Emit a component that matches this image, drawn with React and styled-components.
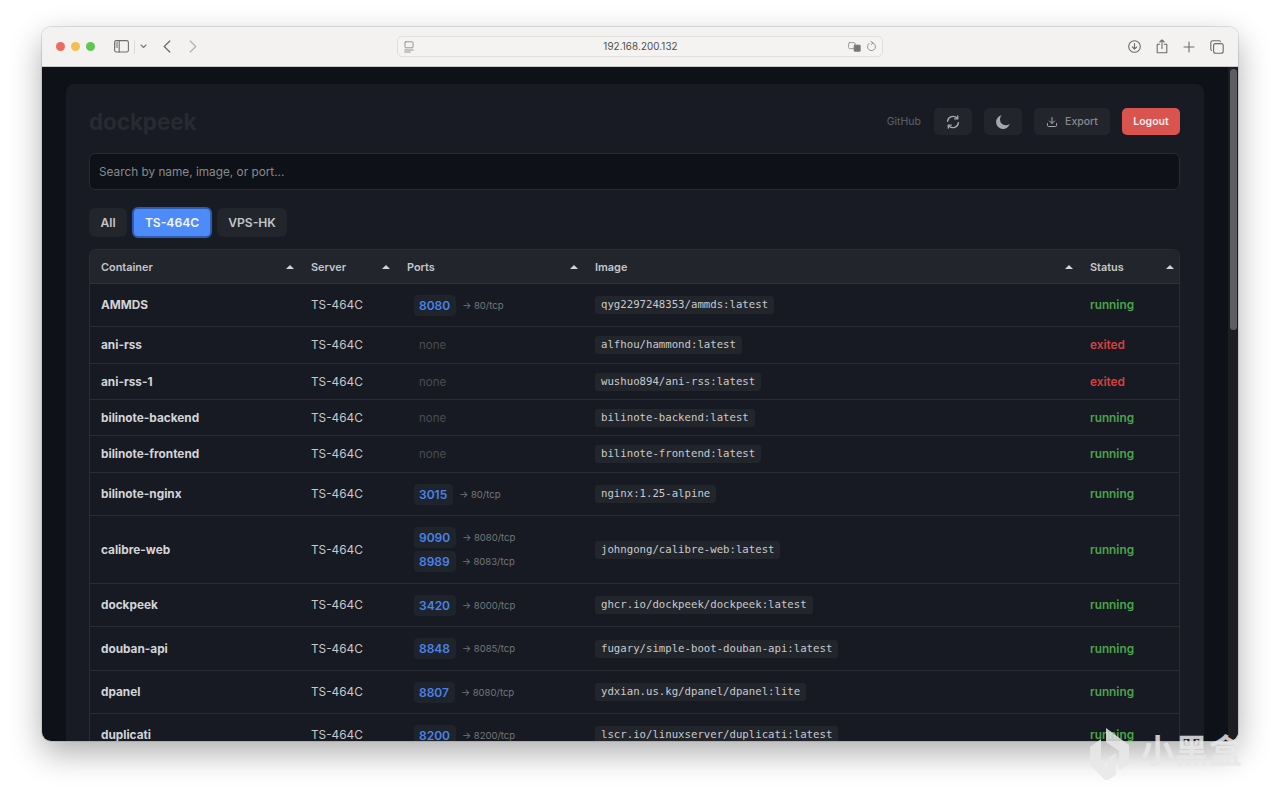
import React from 'react';
import styled, { createGlobalStyle } from 'styled-components';
import { Download } from 'lucide-react';

const Global = createGlobalStyle`
  html, body { margin: 0; padding: 0; background: #fff; height: 100%; overflow: hidden; }
  * { box-sizing: border-box; }
  body { font-family: Inter, "Liberation Sans", sans-serif; }
`;
const Stage = styled.div`
  position: relative;
  width: 1280px;
  height: 797px;
  padding: 27px 42px 56px;
  background: #fff;
  overflow: hidden;
`;
const Win = styled.div`
  display: flex;
  flex-direction: column;
  height: 714px;
  border-radius: 9px;
  overflow: hidden;
  box-shadow: 0 0 0 1px rgba(0,0,0,.1), 0 12px 32px rgba(0,0,0,.32);
`;
const Toolbar = styled.header`
  display: flex;
  align-items: center;
  flex: none;
  height: 40px;
  background: #f3f2f0;
  border-bottom: 1px solid #c9c9c9;
  padding: 0 14px;
`;
const Lights = styled.div`
  display: flex;
  gap: 6px;
  margin-right: 19px;
`;
const Light = styled.span`
  width: 9px;
  height: 9px;
  border-radius: 50%;
  background: ${p => p.$c};
`;
const ToolIcon = styled.svg`
  flex: none;
  display: block;
  margin-left: ${p => p.$ml || 0}px;
  stroke: ${p => p.$c || '#6c6c6c'};
  fill: none;
  stroke-width: ${p => p.$sw || 1.1};
  stroke-linecap: round;
  stroke-linejoin: round;
`;
const Sep = styled.span`
  width: 1px;
  height: 14px;
  background: #dcdcda;
  margin-left: 5px;
`;
const AddressBar = styled.div`
  display: grid;
  grid-template-columns: 1fr auto 1fr;
  align-items: center;
  width: 486px;
  height: 21px;
  margin-left: 200px;
  padding: 0 5px 0 6px;
  border: 1px solid #e0dfdd;
  border-radius: 5px;
  background: #f4f3f1;
`;
const Url = styled.span`
  font-size: 9.8px;
  color: #4e4e4e;
  letter-spacing: .1px;
`;
const AddressRight = styled.div`
  display: flex;
  align-items: center;
  justify-content: flex-end;
  gap: 3px;
`;
const ToolRight = styled.div`
  margin-left: auto;
  display: flex;
  align-items: center;
  gap: 15px;
`;
const Viewport = styled.div`
  flex: 1;
  min-height: 0;
  display: flex;
  background: #0e1117;
  overflow: hidden;
`;
const Page = styled.main`
  flex: 1;
  min-width: 0;
  padding: 17px 24px 0;
`;
const Gutter = styled.div`
  flex: none;
  width: 10px;
  background: #1c1e22;
  padding: 2px 1px 0 2px;
`;
const Thumb = styled.div`
  height: 261px;
  border-radius: 4px;
  background: #5c5e62;
`;
const Panel = styled.section`
  background: #181b23;
  border-radius: 8px 8px 0 0;
  padding: 24px 24px 0 23px;
  height: 700px;
  overflow: hidden;
`;
const TopRow = styled.div`
  display: flex;
  align-items: center;
  height: 27px;
`;
const Logo = styled.h1`
  margin: 0;
  font-size: 22.5px;
  font-weight: 700;
  color: #272a31;
  letter-spacing: -.1px;
`;
const Actions = styled.div`
  margin-left: auto;
  display: flex;
  align-items: center;
  gap: 12px;
`;
const GitHub = styled.span`
  font-size: 10.5px;
  color: #5f636a;
  margin-right: 1px;
`;
const ActionBtn = styled.div`
  display: flex;
  align-items: center;
  justify-content: center;
  gap: 7px;
  height: 27px;
  width: ${p => p.$w}px;
  border-radius: 5px;
  background: ${p => p.$danger ? '#d9534f' : '#22252c'};
  color: ${p => p.$danger ? '#fbeeee' : '#878a90'};
  font-size: 10.5px;
  font-weight: ${p => p.$danger ? 600 : 500};
`;
const Search = styled.div`
  display: flex;
  align-items: center;
  height: 37px;
  margin-top: 18px;
  padding: 0 9px;
  background: #0e1117;
  border: 1px solid #282b32;
  border-radius: 6px;
  font-size: 11.8px;
  color: #878a90;
`;
const Tabs = styled.div`
  display: flex;
  align-items: center;
  gap: 5px;
  margin-top: 17px;
  height: 31px;
`;
const Tab = styled.div`
  display: flex;
  align-items: center;
  justify-content: center;
  width: ${p => p.$w}px;
  height: ${p => p.$active ? 31 : 29}px;
  border-radius: 6px;
  font-size: 12.1px;
  font-weight: 600;
  background: ${p => p.$active ? '#4d8bfb' : '#22252c'};
  color: ${p => p.$active ? '#f3f6fd' : '#c3c5c9'};
  border: ${p => p.$active ? '2px solid #2f5dab' : 'none'};
`;
const TableWrap = styled.div`
  margin-top: 11px;
  border: 1px solid #2a2d34;
  border-bottom: none;
  border-radius: 7px 7px 0 0;
  overflow: hidden;
`;
const Table = styled.table`
  width: 100%;
  table-layout: fixed;
  border-collapse: separate;
  border-spacing: 0;
`;
const Th = styled.th`
  width: ${p => p.$w}px;
  height: 34px;
  padding: 0 ${p => p.$pr}px 0 11px;
  background: #22252c;
  border-bottom: 1px solid #2f323a;
  text-align: left;
  font-size: 10.9px;
  font-weight: 600;
  color: #c4c6ca;
`;
const ThInner = styled.div`
  display: flex;
  align-items: center;
  justify-content: space-between;
`;
const Caret = styled.span`
  width: 0;
  height: 0;
  border-left: 4px solid transparent;
  border-right: 4px solid transparent;
  border-bottom: 4px solid #d4d5d8;
`;
const Td = styled.td`
  height: ${p => p.$rowH}px;
  padding: 0 12px 0 11px;
  background: #171a22;
  border-bottom: 1px solid #2a2d34;
  font-size: 11.8px;
  color: #c6c8cb;
  vertical-align: middle;
`;
const Name = styled(Td)`
  font-weight: 700;
  color: #d3d4d7;
`;
const PortLine = styled.div`
  display: flex;
  align-items: center;
  height: 24px;
  margin-left: 7px;
  gap: 6px;
`;
const PortBadge = styled.span`
  display: inline-flex;
  align-items: center;
  height: 21px;
  padding: 0 6px 0 5px;
  border-radius: 4px;
  background: #1f232b;
  color: #4a82e8;
  font-size: 12px;
  font-weight: 600;
`;
const PortMap = styled.span`
  font-size: 9.5px;
  color: #74777d;
`;
const NonePort = styled.span`
  display: block;
  margin-left: 12px;
  color: #494c53;
  font-size: 11.5px;
`;
const Code = styled.code`
  display: block;
  width: fit-content;
  height: 18px;
  line-height: 18px;
  padding: 0 6px;
  border-radius: 3px;
  background: #22252c;
  font-family: "DejaVu Sans Mono", "Liberation Mono", monospace;
  font-size: 10.68px;
  color: #c9cacd;
`;
const Status = styled(Td)`
  font-weight: 600;
  color: ${p => p.$on ? '#4aa54a' : '#d9403e'};
`;
const Watermark = styled.div`
  position: absolute;
  left: 1090px;
  top: 728px;
  display: flex;
  align-items: flex-start;
  gap: 11px;
  color: rgba(232,232,232,.85);
  pointer-events: none;
`;
const WatermarkText = styled.span`
  font-family: "Noto Sans CJK SC", sans-serif;
  font-size: 33px;
  font-weight: 700;
  letter-spacing: 1px;
  line-height: 1;
  margin-top: 5px;
`;

const rows = [
  ['AMMDS', [['8080', '80/tcp']], 'qyg2297248353/ammds:latest', true, 43],
  ['ani-rss', [], 'alfhou/hammond:latest', false, 37],
  ['ani-rss-1', [], 'wushuo894/ani-rss:latest', false, 36],
  ['bilinote-backend', [], 'bilinote-backend:latest', true, 36],
  ['bilinote-frontend', [], 'bilinote-frontend:latest', true, 37],
  ['bilinote-nginx', [['3015', '80/tcp']], 'nginx:1.25-alpine', true, 43],
  ['calibre-web', [['9090', '8080/tcp'], ['8989', '8083/tcp']], 'johngong/calibre-web:latest', true, 68],
  ['dockpeek', [['3420', '8000/tcp']], 'ghcr.io/dockpeek/dockpeek:latest', true, 43],
  ['douban-api', [['8848', '8085/tcp']], 'fugary/simple-boot-douban-api:latest', true, 44],
  ['dpanel', [['8807', '8080/tcp']], 'ydxian.us.kg/dpanel/dpanel:lite', true, 43],
  ['duplicati', [['8200', '8200/tcp']], 'lscr.io/linuxserver/duplicati:latest', true, 43],
];
const cols = [['Container', 210, 6], ['Server', 96, 6], ['Ports', 188, 6], ['Image', 495, 6], ['Status', 102, 7]];

export default function App() {
  return (
    <Stage>
      <Global />
      <Win>
        <Toolbar>
          <Lights>
            <Light $c="#ec6a5e" /><Light $c="#f4bf4f" /><Light $c="#61c554" />
          </Lights>
          <ToolIcon width="15" height="13" viewBox="0 0 15 13">
            <rect x=".6" y=".6" width="13.8" height="11.4" rx="1.8" />
            <path d="M5.2.6v11.4" />
            <path d="M2 3h1.6M2 5h1.6M2 7h1.6" strokeWidth="1" />
          </ToolIcon>
          <Sep />
          <ToolIcon width="7" height="5" viewBox="0 0 7 5" $ml={5} $c="#777"><path d="M1 1l2.5 2.5L6 1" /></ToolIcon>
          <ToolIcon width="8" height="13" viewBox="0 0 8 13" $ml={16} $sw={1.3}><path d="M6.8 1L1.2 6.5 6.8 12" /></ToolIcon>
          <ToolIcon width="8" height="13" viewBox="0 0 8 13" $ml={18} $c="#b3b3b3" $sw={1.3}><path d="M1.2 1L6.8 6.5 1.2 12" /></ToolIcon>
          <AddressBar>
            <ToolIcon width="10" height="12" viewBox="0 0 10 12" $c="#8b8b8b" $sw={.9}>
              <rect x="1" y=".8" width="8" height="6" rx=".8" /><path d="M.7 9h8.6M.7 11h5.6" />
            </ToolIcon>
            <Url>192.168.200.132</Url>
            <AddressRight>
              <ToolIcon width="13" height="10" viewBox="0 0 13 10" $c="#8a8a8a" $sw={.8}>
                <rect x=".6" y=".6" width="6.4" height="6" rx="1" />
                <rect x="6" y="3" width="6.4" height="6.4" rx="1" fill="#777" />
              </ToolIcon>
              <ToolIcon width="11" height="11" viewBox="0 0 11 11" $ml={2} $c="#8a8a8a" $sw={.9}>
                <path d="M6.7 1.8A4 4 0 1 1 3 2.5" /><path d="M4.8.6L6.9 1.8 5.3 3.6" />
              </ToolIcon>
            </AddressRight>
          </AddressBar>
          <ToolRight>
            <ToolIcon width="13" height="13" viewBox="0 0 13 13">
              <circle cx="6.5" cy="6.5" r="5.8" /><path d="M6.5 3.5v5.4M4.4 7l2.1 2.1L8.6 7" />
            </ToolIcon>
            <ToolIcon width="12" height="15" viewBox="0 0 12 15">
              <path d="M3.6 5.2H1.2v8.6h9.6V5.2H8.4M6 9.4V1M3.8 3L6 .9 8.2 3" />
            </ToolIcon>
            <ToolIcon width="12" height="12" viewBox="0 0 12 12"><path d="M6 1v10M1 6h10" /></ToolIcon>
            <ToolIcon width="14" height="14" viewBox="0 0 14 14">
              <rect x="3.6" y="3.6" width="9.6" height="9.6" rx="2" /><path d="M10.4 1.6A1.6 1.6 0 0 0 9 .8H2.6A1.8 1.8 0 0 0 .8 2.6V9a1.6 1.6 0 0 0 .8 1.4" />
            </ToolIcon>
          </ToolRight>
        </Toolbar>
        <Viewport>
          <Page>
            <Panel>
              <TopRow>
                <Logo>dockpeek</Logo>
                <Actions>
                  <GitHub>GitHub</GitHub>
                  <ActionBtn $w={38}>
                    <ToolIcon width="14" height="14" viewBox="0 0 14 14" $c="#a4a7ac" $sw={1.4}>
                      <path d="M1.6 6.2A5.5 5.5 0 0 1 11 3.1" /><path d="M11.7.9v3h-3" />
                      <path d="M12.4 7.8A5.5 5.5 0 0 1 3 10.9" /><path d="M2.3 13.1v-3h3" />
                    </ToolIcon>
                  </ActionBtn>
                  <ActionBtn $w={38}>
                    <svg width="14" height="14" viewBox="0 0 14 14"><path d="M5.8.3a6.9 6.9 0 1 0 7.9 8.4A5 5 0 0 1 5.8.3z" fill="#a4a7ac" /></svg>
                  </ActionBtn>
                  <ActionBtn $w={76}>
                    <Download size={12} color="#a4a7ac" strokeWidth={2} />
                    Export
                  </ActionBtn>
                  <ActionBtn $w={58} $danger>Logout</ActionBtn>
                </Actions>
              </TopRow>
              <Search>Search by name, image, or port...</Search>
              <Tabs>
                <Tab $w={38}>All</Tab>
                <Tab $w={80} $active>TS-464C</Tab>
                <Tab $w={70}>VPS-HK</Tab>
              </Tabs>
              <TableWrap>
                <Table>
                  <thead>
                    <tr>
                      {cols.map(([label, w, pr]) => (
                        <Th key={label} $w={w} $pr={pr}><ThInner>{label}<Caret /></ThInner></Th>
                      ))}
                    </tr>
                  </thead>
                  <tbody>
                    {rows.map(([name, ports, image, on, h]) => (
                      <tr key={name}>
                        <Name as="td" $rowH={h}>{name}</Name>
                        <Td $rowH={h}>TS-464C</Td>
                        <Td $rowH={h}>
                          {ports.length === 0 && <NonePort>none</NonePort>}
                          {ports.map(([host, target]) => (
                            <PortLine key={host}>
                              <PortBadge>{host}</PortBadge>
                              <PortMap>→ {target}</PortMap>
                            </PortLine>
                          ))}
                        </Td>
                        <Td $rowH={h}><Code>{image}</Code></Td>
                        <Status as="td" $rowH={h} $on={on}>{on ? 'running' : 'exited'}</Status>
                      </tr>
                    ))}
                  </tbody>
                </Table>
              </TableWrap>
            </Panel>
          </Page>
          <Gutter><Thumb /></Gutter>
        </Viewport>
      </Win>
      <Watermark>
        <svg width="40" height="52" viewBox="0 0 40 52" fill="currentColor">
          <path d="M16 0l23 17v19l-10 6V23L16 14z" />
          <path d="M0 19l11-8v24l7 4v-9l8-5v22l-10 6L0 37z" />
        </svg>
        <WatermarkText>小黑盒</WatermarkText>
      </Watermark>
    </Stage>
  );
}
